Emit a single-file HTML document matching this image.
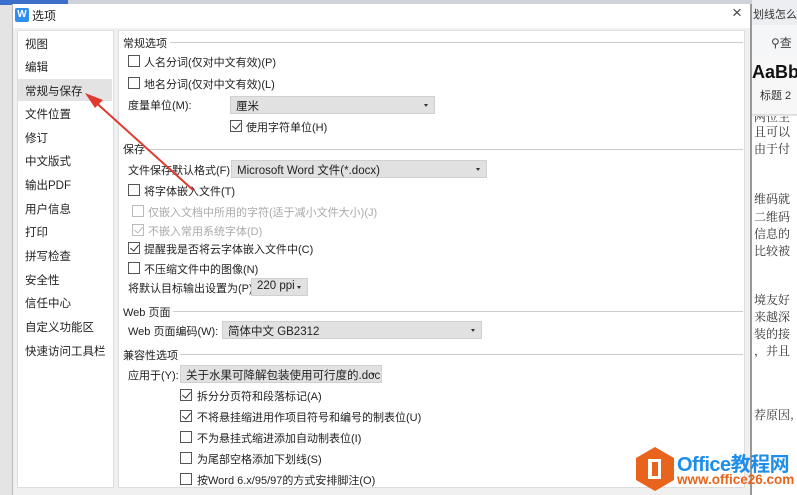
<!DOCTYPE html>
<html><head><meta charset="utf-8"><style>
*{margin:0;padding:0;box-sizing:border-box}
body{width:797px;height:495px;overflow:hidden;position:relative;background:#e4e4e4;font-family:"Liberation Sans","Noto Sans CJK SC",sans-serif;font-size:11px;color:#222}
.a{position:absolute;white-space:nowrap}
.cb{position:absolute;width:12px;height:12px;border:1px solid #555;background:#fff}
.cb.ck::after{content:"";position:absolute;left:3px;top:0px;width:4px;height:7px;border:solid #333;border-width:0 1.3px 1.3px 0;transform:rotate(40deg)}
.cb.dis{border-color:#bbb}.cb.dis.ck::after{border-color:#bbb}
.sel{position:absolute;height:18px;background:#e1e1e1;border:1px solid #d0d0d0;padding:1px 5px;font-size:11.5px;overflow:hidden;white-space:nowrap}
.sel::after{content:"";position:absolute;right:6px;top:7px;border:2px solid transparent;border-top:3px solid #333}
.hl{position:absolute;height:1px;background:#ccc}
.li{position:absolute;left:25px;font-size:11.5px;white-space:nowrap}
.dt{position:absolute;left:2px;font-family:"Noto Serif CJK SC",serif;font-size:12px;color:#333;white-space:nowrap;line-height:14px}
</style></head><body>
<div class="a" style="left:0;top:0;width:68px;height:5px;background:#3b6fc9"></div>
<div class="a" style="left:68px;top:0;width:690px;height:5px;background:#cfd3d9"></div>
<div class="a" style="left:752px;top:0;width:45px;height:25px;background:#eceef1;overflow:hidden"><div class="a" style="left:1px;top:6px;font-size:11px;color:#333">划线怎么办</div></div>
<div class="a" style="left:752px;top:25px;width:45px;height:33px;background:#f5f6f7;overflow:hidden"><div class="a" style="left:19px;top:9px;font-size:12px;color:#444">⚲查</div></div>
<div class="a" style="left:752px;top:58px;width:45px;height:57px;background:#f7f7f7;border-bottom:1px solid #ddd;overflow:hidden">
<div class="a" style="left:0;top:4px;font-size:18px;font-weight:bold;color:#111">AaBb</div>
<div class="a" style="left:8px;top:29px;font-size:11px;color:#333">标题 2</div></div>
<div class="a" style="left:752px;top:116px;width:45px;height:379px;background:#fff;overflow:hidden">
<div class="dt" style="top:-6px">两位主</div>
<div class="dt" style="top:9px">且可以</div>
<div class="dt" style="top:26px">由于付</div>
<div class="dt" style="top:76px">维码就</div>
<div class="dt" style="top:94px">二维码</div>
<div class="dt" style="top:111px">信息的</div>
<div class="dt" style="top:128px">比较被</div>
<div class="dt" style="top:177px">境友好</div>
<div class="dt" style="top:194px">来越深</div>
<div class="dt" style="top:211px">装的接</div>
<div class="dt" style="top:228px">，并且</div>
<div class="dt" style="top:292px">荐原因,</div>
</div>
<div class="a" style="left:12px;top:4px;width:740px;height:491px;background:#f0f0f0;border-left:1px solid #bbb;border-right:2px solid #999"></div>
<div class="a" style="left:13px;top:4px;width:737px;height:24px;background:#fff"></div>
<div class="a" style="left:15px;top:8px;width:14px;height:14px;background:#2f8ef0;border-radius:2px;color:#fff;font-size:10px;font-weight:bold;text-align:center;line-height:14px">W</div>
<div class="a" style="left:32px;top:7px;font-size:12px">选项</div>
<div class="a" style="left:732px;top:3px;font-size:17px;color:#444">×</div>
<div class="a" style="left:17px;top:30px;width:97px;height:458px;background:#fff;border:1px solid #ddd"></div>
<div class="a" style="left:18px;top:79px;width:94px;height:22px;background:#e3e3e3"></div>
<div class="li" style="top:36px">视图</div>
<div class="li" style="top:59px">编辑</div>
<div class="li" style="top:83px">常规与保存</div>
<div class="li" style="top:106px">文件位置</div>
<div class="li" style="top:130px">修订</div>
<div class="li" style="top:153px">中文版式</div>
<div class="li" style="top:177px">输出PDF</div>
<div class="li" style="top:201px">用户信息</div>
<div class="li" style="top:224px">打印</div>
<div class="li" style="top:248px">拼写检查</div>
<div class="li" style="top:272px">安全性</div>
<div class="li" style="top:295px">信任中心</div>
<div class="li" style="top:319px">自定义功能区</div>
<div class="li" style="top:343px">快速访问工具栏</div>
<div class="a" style="left:118px;top:30px;width:627px;height:458px;background:#fff;border:1px solid #ddd"></div>
<div class="a" style="left:123px;top:35px">常规选项</div><div class="hl" style="left:170px;top:42px;width:573px"></div>
<div class="cb" style="left:128px;top:55px"></div><div class="a" style="left:144px;top:54px">人名分词(仅对中文有效)(P)</div>
<div class="cb" style="left:128px;top:77px"></div><div class="a" style="left:144px;top:76px">地名分词(仅对中文有效)(L)</div>
<div class="a" style="left:128px;top:97px">度量单位(M):</div>
<div class="sel" style="left:230px;top:96px;width:205px">厘米</div>
<div class="cb ck" style="left:230px;top:120px"></div><div class="a" style="left:246px;top:119px">使用字符单位(H)</div>
<div class="a" style="left:123px;top:141px">保存</div><div class="hl" style="left:148px;top:149px;width:595px"></div>
<div class="a" style="left:128px;top:162px">文件保存默认格式(F):</div>
<div class="sel" style="left:231px;top:160px;width:256px">Microsoft Word 文件(*.docx)</div>
<div class="cb" style="left:128px;top:184px"></div><div class="a" style="left:144px;top:183px">将字体嵌入文件(T)</div>
<div class="cb dis" style="left:132px;top:205px"></div><div class="a" style="left:148px;top:204px;color:#aaa">仅嵌入文档中所用的字符(适于减小文件大小)(J)</div>
<div class="cb dis ck" style="left:132px;top:224px"></div><div class="a" style="left:148px;top:223px;color:#aaa">不嵌入常用系统字体(D)</div>
<div class="cb ck" style="left:128px;top:242px"></div><div class="a" style="left:144px;top:241px">提醒我是否将云字体嵌入文件中(C)</div>
<div class="cb" style="left:128px;top:262px"></div><div class="a" style="left:144px;top:261px">不压缩文件中的图像(N)</div>
<div class="a" style="left:128px;top:280px">将默认目标输出设置为(P):</div>
<div class="sel" style="left:251px;top:278px;width:57px">220 ppi</div>
<div class="a" style="left:123px;top:304px">Web 页面</div><div class="hl" style="left:173px;top:311px;width:570px"></div>
<div class="a" style="left:128px;top:323px">Web 页面编码(W):</div>
<div class="sel" style="left:222px;top:321px;width:260px">简体中文 GB2312</div>
<div class="a" style="left:123px;top:347px">兼容性选项</div><div class="hl" style="left:180px;top:354px;width:563px"></div>
<div class="a" style="left:128px;top:367px">应用于(Y):</div>
<div class="sel" style="left:180px;top:365px;width:202px">关于水果可降解包装使用可行度的.doc</div>
<div class="cb ck" style="left:180px;top:389px"></div><div class="a" style="left:197px;top:388px">拆分分页符和段落标记(A)</div>
<div class="cb ck" style="left:180px;top:410px"></div><div class="a" style="left:197px;top:409px">不将悬挂缩进用作项目符号和编号的制表位(U)</div>
<div class="cb" style="left:180px;top:431px"></div><div class="a" style="left:197px;top:430px">不为悬挂式缩进添加自动制表位(I)</div>
<div class="cb" style="left:180px;top:452px"></div><div class="a" style="left:197px;top:451px">为尾部空格添加下划线(S)</div>
<div class="cb" style="left:180px;top:473px"></div><div class="a" style="left:197px;top:472px">按Word 6.x/95/97的方式安排脚注(O)</div>
<svg class="a" style="left:0;top:0" width="797" height="495"><line x1="193" y1="190" x2="92" y2="99" stroke="#e0392f" stroke-width="2"/><polygon points="85,93 103,100 95,108" fill="#e0392f"/></svg>
<svg class="a" style="left:634px;top:446px" width="42" height="46"><polygon points="21,1 40,12 40,34 21,45 2,34 2,12" fill="#e8641c"/><rect x="14" y="13" width="13" height="20" fill="#fff"/><rect x="18" y="16" width="6" height="14" fill="#e8641c"/></svg>
<div class="a" style="left:677px;top:448px;font-size:20px;font-weight:bold;color:#1e8ee8;letter-spacing:-0.5px">Office教程网</div>
<div class="a" style="left:677px;top:472px;font-size:13.5px;font-weight:bold;color:#e8641c">www.office26.com</div>
</body></html>
